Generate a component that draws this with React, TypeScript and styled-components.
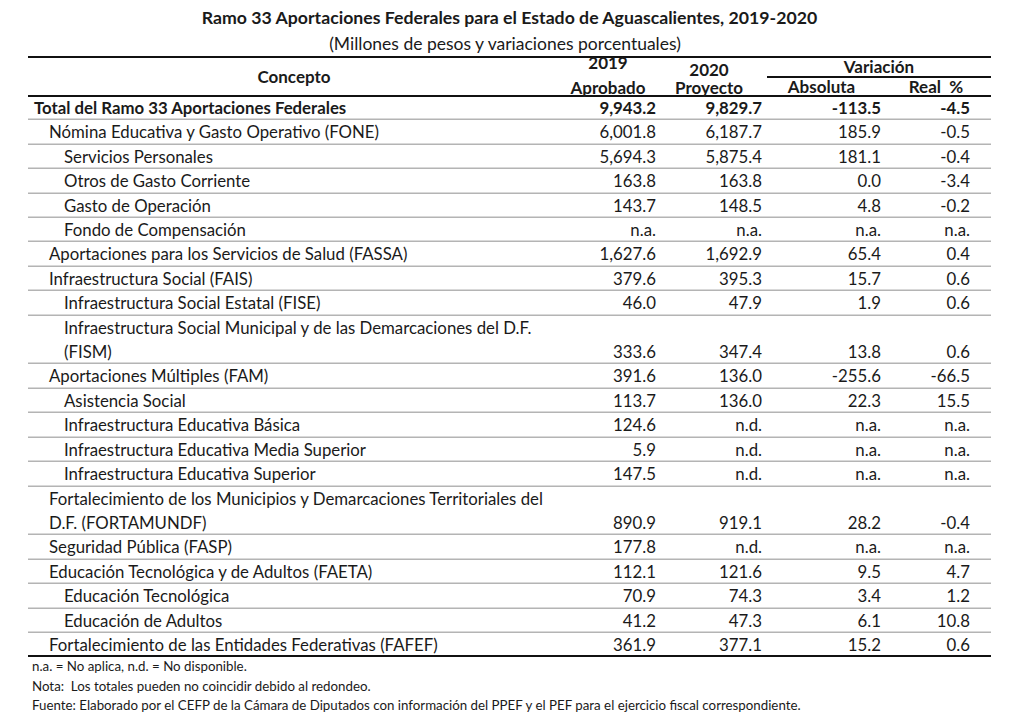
import React from "react";
import styled, { createGlobalStyle } from "styled-components";

const GlobalStyle = createGlobalStyle`
  body {
    margin: 0;
    background: #ffffff;
    font-family: Lato, "Liberation Sans", sans-serif;
    color: #1a1a1a;
  }
`;

const Page = styled.div`
  width: 1024px;
  height: 721px;
  padding: 8px 33px 0 28px;
  box-sizing: border-box;
`;

const Title = styled.div`
  text-align: center;
  font-weight: 700;
  font-size: 17.7px;
  line-height: 20px;
`;

const Subtitle = styled.div`
  text-align: center;
  font-size: 17.5px;
  line-height: 20px;
  margin-top: 6px;
  padding-right: 9px;
`;

const COLS = "532px 96px 106px 119px 89px 21px";

const Header = styled.div`
  display: grid;
  grid-template-columns: ${COLS};
  grid-template-rows: 37px;
  height: 37px;
  margin-top: 2px;
  margin-bottom: -1px;
  border-top: 2px solid #111;
  border-bottom: 2px solid #111;
  font-weight: 700;
  font-size: 17px;
`;

const HeadCell = styled.div`
  display: flex;
  flex-direction: column;
  align-items: center;
  justify-content: center;
`;

const YearCell = styled.div`
  display: flex;
  flex-direction: column;
`;

const Stack = styled.div<{ $top: number; $gap: number; $lh: number }>`
  display: flex;
  flex-direction: column;
  align-items: center;
  gap: ${(p) => p.$gap}px;
  line-height: ${(p) => p.$lh}px;
  margin-top: ${(p) => p.$top}px;
`;

const Variation = styled.div`
  grid-column: 4 / span 3;
  display: flex;
  flex-direction: column;
`;

const VarTitle = styled.div`
  line-height: 18px;
  text-align: center;
  margin-left: 5px;
  border-bottom: 2px solid #111;
`;

const VarSub = styled.div`
  display: grid;
  grid-template-columns: 119px 110px;
  line-height: 17px;
  text-align: center;
`;

const Row = styled.div<{ $bold?: boolean; $last?: boolean }>`
  display: grid;
  grid-template-columns: ${COLS};
  font-size: 16.8px;
  line-height: 24.4px;
  font-weight: ${(p) => (p.$bold ? 700 : 400)};
  box-shadow: inset 0 -${(p) => (p.$last ? 2 : 1.5)}px 0
    ${(p) => (p.$last ? "#111" : "#b4b4b4")};
`;

const Concept = styled.div<{ $level: number }>`
  padding-left: ${(p) => 6 + p.$level * 15}px;
  white-space: pre;
`;

const Num = styled.div`
  text-align: right;
  align-self: end;
`;

const Notes = styled.div`
  font-size: 13.3px;
  line-height: 19.5px;
  padding-left: 4px;
`;

type Line = {
  label: string;
  level: number;
  v: [string, string, string, string];
  bold?: boolean;
};

const rows: Line[] = [
  { label: "Total del Ramo 33 Aportaciones Federales", level: 0, bold: true, v: ["9,943.2", "9,829.7", "-113.5", "-4.5"] },
  { label: "Nómina Educativa y Gasto Operativo (FONE)", level: 1, v: ["6,001.8", "6,187.7", "185.9", "-0.5"] },
  { label: "Servicios Personales", level: 2, v: ["5,694.3", "5,875.4", "181.1", "-0.4"] },
  { label: "Otros de Gasto Corriente", level: 2, v: ["163.8", "163.8", "0.0", "-3.4"] },
  { label: "Gasto de Operación", level: 2, v: ["143.7", "148.5", "4.8", "-0.2"] },
  { label: "Fondo de Compensación", level: 2, v: ["n.a.", "n.a.", "n.a.", "n.a."] },
  { label: "Aportaciones para los Servicios de Salud (FASSA)", level: 1, v: ["1,627.6", "1,692.9", "65.4", "0.4"] },
  { label: "Infraestructura Social (FAIS)", level: 1, v: ["379.6", "395.3", "15.7", "0.6"] },
  { label: "Infraestructura Social Estatal (FISE)", level: 2, v: ["46.0", "47.9", "1.9", "0.6"] },
  { label: "Infraestructura Social Municipal y de las Demarcaciones del D.F.\n(FISM)", level: 2, v: ["333.6", "347.4", "13.8", "0.6"] },
  { label: "Aportaciones Múltiples (FAM)", level: 1, v: ["391.6", "136.0", "-255.6", "-66.5"] },
  { label: "Asistencia Social", level: 2, v: ["113.7", "136.0", "22.3", "15.5"] },
  { label: "Infraestructura Educativa Básica", level: 2, v: ["124.6", "n.d.", "n.a.", "n.a."] },
  { label: "Infraestructura Educativa Media Superior", level: 2, v: ["5.9", "n.d.", "n.a.", "n.a."] },
  { label: "Infraestructura Educativa Superior", level: 2, v: ["147.5", "n.d.", "n.a.", "n.a."] },
  { label: "Fortalecimiento de los Municipios y Demarcaciones Territoriales del\nD.F. (FORTAMUNDF)", level: 1, v: ["890.9", "919.1", "28.2", "-0.4"] },
  { label: "Seguridad Pública (FASP)", level: 1, v: ["177.8", "n.d.", "n.a.", "n.a."] },
  { label: "Educación Tecnológica y de Adultos (FAETA)", level: 1, v: ["112.1", "121.6", "9.5", "4.7"] },
  { label: "Educación Tecnológica", level: 2, v: ["70.9", "74.3", "3.4", "1.2"] },
  { label: "Educación de Adultos", level: 2, v: ["41.2", "47.3", "6.1", "10.8"] },
  { label: "Fortalecimiento de las Entidades Federativas (FAFEF)", level: 1, v: ["361.9", "377.1", "15.2", "0.6"] },
];

export default function App() {
  return (
    <Page>
      <GlobalStyle />
      <Title>Ramo 33 Aportaciones Federales para el Estado de Aguascalientes, 2019-2020</Title>
      <Subtitle>(Millones de pesos y variaciones porcentuales)</Subtitle>
      <Header>
        <HeadCell>Concepto</HeadCell>
        <YearCell>
          <Stack $top={-3} $gap={9} $lh={16}>
            <span>2019</span>
            <span>Aprobado</span>
          </Stack>
        </YearCell>
        <YearCell>
          <Stack $top={3} $gap={1} $lh={17}>
            <span>2020</span>
            <span>Proyecto</span>
          </Stack>
        </YearCell>
        <Variation>
          <VarTitle>Variación</VarTitle>
          <VarSub>
            <span>Absoluta</span>
            <span>Real&nbsp; %</span>
          </VarSub>
        </Variation>
      </Header>
      {rows.map((r, i) => (
        <Row key={r.label} $bold={r.bold} $last={i === rows.length - 1}>
          <Concept $level={r.level}>{r.label}</Concept>
          {r.v.map((n, j) => (
            <Num key={j}>{n}</Num>
          ))}
          <span />
        </Row>
      ))}
      <Notes>
        <div>n.a. = No aplica, n.d. = No disponible.</div>
        <div>Nota:&nbsp; Los totales pueden no coincidir debido al redondeo.</div>
        <div>Fuente: Elaborado por el CEFP de la Cámara de Diputados con información del PPEF y el PEF para el ejercicio fiscal correspondiente.</div>
      </Notes>
    </Page>
  );
}
